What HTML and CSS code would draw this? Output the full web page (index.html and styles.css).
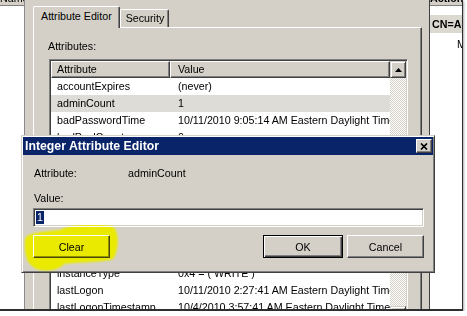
FILE: index.html
```html
<!DOCTYPE html>
<html>
  <head>
    <link rel="stylesheet" href="styles.css">
  </head>
  <body>
    <div class="frame">
      <div class="results-pane">
        <div class="pane-header"><span>Name</span></div>
      </div>

      <div class="props-dialog">
        <div class="tabs">
          <div class="tab active">Attribute Editor</div>
          <div class="tab">Security</div>
        </div>

        <div class="tab-panel">
          <div class="field-label">Attributes:</div>
          <div class="listview">
            <div class="lv-main">
              <div class="lv-header">
                <div class="col-attr">Attribute</div>
                <div class="col-value">Value</div>
              </div>
              <div class="lv-row"><div class="col-attr">accountExpires</div><div class="col-value">(never)</div></div>
              <div class="lv-row selected"><div class="col-attr">adminCount</div><div class="col-value">1</div></div>
              <div class="lv-row"><div class="col-attr">badPasswordTime</div><div class="col-value">10/11/2010 9:05:14 AM Eastern Daylight Time</div></div>
              <div class="lv-row"><div class="col-attr">badPwdCount</div><div class="col-value">0</div></div>
              <div class="lv-row"><div class="col-attr">cn</div><div class="col-value">Administrator</div></div>
              <div class="lv-row"><div class="col-attr">codePage</div><div class="col-value">0</div></div>
              <div class="lv-row"><div class="col-attr">countryCode</div><div class="col-value">0</div></div>
              <div class="lv-row"><div class="col-attr">description</div><div class="col-value">Built-in account for administering the computer/domain</div></div>
              <div class="lv-row"><div class="col-attr">displayName</div><div class="col-value">Administrator</div></div>
              <div class="lv-row"><div class="col-attr">distinguishedName</div><div class="col-value">CN=Administrator,CN=Users,DC=contoso,DC=com</div></div>
              <div class="lv-row"><div class="col-attr">dSCorePropagationData</div><div class="col-value">10/4/2010 3:41:20 AM Eastern Daylight Time</div></div>
              <div class="lv-row"><div class="col-attr">instanceType</div><div class="col-value">0x4 = ( WRITE )</div></div>
              <div class="lv-row"><div class="col-attr">lastLogon</div><div class="col-value">10/11/2010 2:27:41 AM Eastern Daylight Time</div></div>
              <div class="lv-row"><div class="col-attr">lastLogonTimestamp</div><div class="col-value">10/4/2010 3:57:41 AM Eastern Daylight Time</div></div>
            </div>
            <div class="scrollbar">
              <div class="sb-button">
                <svg width="7" height="4" viewBox="0 0 7 4"><path d="M0 4h7L3.5 0z" fill="#000"/></svg>
              </div>
              <div class="sb-track"><div class="sb-thumb"></div></div>
              <div class="sb-button">
                <svg width="7" height="4" viewBox="0 0 7 4"><path d="M0 0h7L3.5 4z" fill="#000"/></svg>
              </div>
            </div>
          </div>
        </div>
      </div>

      <div class="actions-pane">
        <div class="pane-header bold"><span>Actions</span></div>
        <div class="action-title">CN=Administrator</div>
        <div class="action-item">More Actions</div>
      </div>

      <!-- the editor window sits over the properties dialog -->
      <div class="editor">
        <div class="title-bar">
          <span>Integer Attribute Editor</span>
          <div class="close-button">
            <svg width="8" height="7" viewBox="0 0 8 7"><path d="M1 0.5l6 6M7 0.5l-6 6" stroke="#000" stroke-width="1.7"/></svg>
          </div>
        </div>
        <div class="editor-body">
          <div class="info-row">
            <div class="info-label">Attribute:</div>
            <div>adminCount</div>
          </div>
          <div class="value-label">Value:</div>
          <div class="value-input"><span class="selection">1</span></div>
          <div class="button-row">
            <button class="win-button">Clear</button>
            <div class="spacer"></div>
            <button class="win-button default">OK</button>
            <button class="win-button">Cancel</button>
          </div>
        </div>
      </div>

      <!-- yellow highlighter mark over the Clear button -->
      <svg class="marker" width="106" height="58" viewBox="0 0 106 58">
        <defs>
          <filter id="soft"><feGaussianBlur stdDeviation="1.2"/></filter>
        </defs>
        <path d="M7 22C7 15 22 14 42 12C50 6 82 4 94 8C102 12 101 34 95 41C82 45 57 44 46 46C40 54 20 55 14 48C8 44 6 32 7 22Z" fill="#ffff00" filter="url(#soft)"/>
      </svg>
    </div>
  </body>
</html>
```

FILE: styles.css
```css
* {
  box-sizing: border-box;
}

body {
  margin: 0;
  background-color: #ffffff;
  font-family: "Liberation Sans", Arial, sans-serif;
  font-size: 10.7px;
  color: #000000;
}

.frame {
  position: relative;
  display: flex;
  width: 463px;
  height: 311px;
  overflow: hidden;
  background-color: #ffffff;
  border-right: 1px solid #2e2e2e;
  border-bottom: 2px solid #2e2e2e;
  box-shadow: 1px 1px 2px rgba(0, 0, 0, 0.35);
}

/* MMC panes on each side */
.results-pane {
  width: 24px;
  flex-shrink: 0;
}

.pane-header {
  height: 6px;
  overflow: hidden;
  background-color: #d4d0c8;
  border-bottom: 1px solid #808080;
}

.pane-header span {
  display: block;
  margin-top: -8px;
  line-height: 13px;
  white-space: nowrap;
}

.pane-header.bold {
  font-weight: bold;
}

.actions-pane {
  flex: 1;
  min-width: 0;
  white-space: nowrap;
}

.action-title {
  margin-top: 9px;
  height: 18px;
  line-height: 18px;
  padding-left: 2px;
  font-weight: bold;
  background-color: #dcd9d1;
  overflow: hidden;
}

.action-item {
  margin-top: 5px;
  padding-left: 27px;
  line-height: 13px;
}

/* properties dialog */
.props-dialog {
  width: 406px;
  flex-shrink: 0;
  background-color: #d4d0c8;
  border-left: 1px solid #8a8a8a;
  border-right: 1px solid #404040;
  padding: 6px 7px 0 8px;
}

.tabs {
  display: flex;
  align-items: flex-end;
  height: 21px;
}

.tab {
  height: 18px;
  line-height: 16px;
  padding: 0 4px 0 5px;
  border: 1px solid;
  border-color: #ffffff #404040 transparent #ffffff;
  border-bottom: 0;
  border-radius: 2px 2px 0 0;
  box-shadow: inset -1px 0 #808080;
  white-space: nowrap;
}

.tab.active {
  position: relative;
  z-index: 1;
  height: 22px;
  line-height: 19px;
  margin-bottom: -1px;
  padding: 0 7px;
  background-color: #d4d0c8;
}

.tab-panel {
  height: 420px;
  border-top: 1px solid #ffffff;
  border-left: 1px solid #ffffff;
  border-right: 1px solid #404040;
  box-shadow: inset -1px 0 #808080;
  padding: 12px 0 0 14px;
}

.field-label {
  line-height: 13px;
}

/* list view */
.listview {
  display: flex;
  width: 359px;
  height: 266px;
  margin: 6px 0 0 1px;
  padding: 1px;
  background-color: #ffffff;
  border: 1px solid;
  border-color: #808080 #ffffff #ffffff #808080;
  box-shadow: inset 1px 1px #404040, inset -1px -1px #d4d0c8;
}

.lv-main {
  flex: 1;
  min-width: 0;
  overflow: hidden;
}

.lv-header {
  display: flex;
  height: 17px;
}

.lv-header > div {
  background-color: #d4d0c8;
  border: 1px solid;
  border-color: #ffffff #404040 #404040 #ffffff;
  box-shadow: inset -1px -1px #808080;
  line-height: 15px;
}

.lv-header .col-attr {
  padding-left: 5px;
}

.lv-header .col-value {
  padding-left: 7px;
}

.col-attr {
  width: 119px;
  flex-shrink: 0;
  padding-left: 6px;
  overflow: hidden;
}

.col-value {
  flex: 1;
  min-width: 0;
  padding-left: 8px;
  overflow: hidden;
}

.lv-row {
  display: flex;
  height: 17px;
  line-height: 17px;
  white-space: nowrap;
}

.lv-row.selected {
  background-color: #dedcd6;
}

.scrollbar {
  display: flex;
  flex-direction: column;
  width: 16px;
  flex-shrink: 0;
}

.sb-button {
  height: 17px;
  display: flex;
  align-items: center;
  justify-content: center;
  background-color: #d4d0c8;
  border: 1px solid;
  border-color: #d4d0c8 #404040 #404040 #d4d0c8;
  box-shadow: inset 1px 1px #ffffff, inset -1px -1px #808080;
}

.sb-track {
  flex: 1;
  background: repeating-conic-gradient(#ffffff 0 25%, #d4d0c8 0 50%) 0 0 / 2px 2px;
}

.sb-thumb {
  height: 80px;
  margin-top: 75px;
  background-color: #d4d0c8;
  border: 1px solid;
  border-color: #d4d0c8 #404040 #404040 #d4d0c8;
  box-shadow: inset 1px 1px #ffffff, inset -1px -1px #808080;
}

/* Integer Attribute Editor window */
.editor {
  position: absolute;
  left: 21px;
  top: 135px;
  width: 414px;
  height: 138px;
  padding: 1px 1px 0 1px;
  background-color: #d4d0c8;
  border: 1px solid;
  border-color: #d4d0c8 #404040 #404040 #d4d0c8;
  box-shadow: inset 1px 1px #ffffff, inset -1px -1px #808080;
}

.title-bar {
  display: flex;
  align-items: center;
  justify-content: space-between;
  height: 18px;
  padding: 0 1px 0 2px;
  background-color: #0a246a;
  color: #ffffff;
  font-weight: bold;
  font-size: 12.3px;
}

.close-button {
  width: 16px;
  height: 14px;
  display: flex;
  align-items: center;
  justify-content: center;
  background-color: #d4d0c8;
  border: 1px solid;
  border-color: #ffffff #404040 #404040 #ffffff;
  box-shadow: inset -1px -1px #808080;
}

.editor-body {
  padding: 12px 9px 0 10px;
}

.info-row {
  display: flex;
  line-height: 13px;
  padding-left: 1px;
}

.info-label {
  width: 94px;
}

.value-label {
  margin-top: 12px;
  padding-left: 1px;
  line-height: 13px;
}

.value-input {
  height: 19px;
  margin-top: 3px;
  padding: 2px;
  background-color: #ffffff;
  border: 1px solid;
  border-color: #808080 #ffffff #ffffff #808080;
  box-shadow: inset 1px 1px #404040, inset -1px -1px #d4d0c8;
}

.selection {
  display: inline-block;
  line-height: 13px;
  padding: 0 1px;
  background-color: #0a246a;
  color: #ffffff;
  vertical-align: top;
}

.button-row {
  display: flex;
  gap: 4px;
  margin-top: 8px;
}

.spacer {
  flex: 1;
}

.win-button {
  width: 77px;
  height: 23px;
  padding: 0;
  font-family: inherit;
  font-size: inherit;
  color: #000000;
  background-color: #d4d0c8;
  border: 1px solid;
  border-color: #ffffff #404040 #404040 #ffffff;
  box-shadow: inset -1px -1px #808080;
}

.win-button.default {
  width: 80px;
  border-color: #000000;
  box-shadow: inset 1px 1px #ffffff, inset -1px -1px #404040, inset -2px -2px #808080;
}

.marker {
  position: absolute;
  left: 18px;
  top: 218px;
  mix-blend-mode: color;
}
```
